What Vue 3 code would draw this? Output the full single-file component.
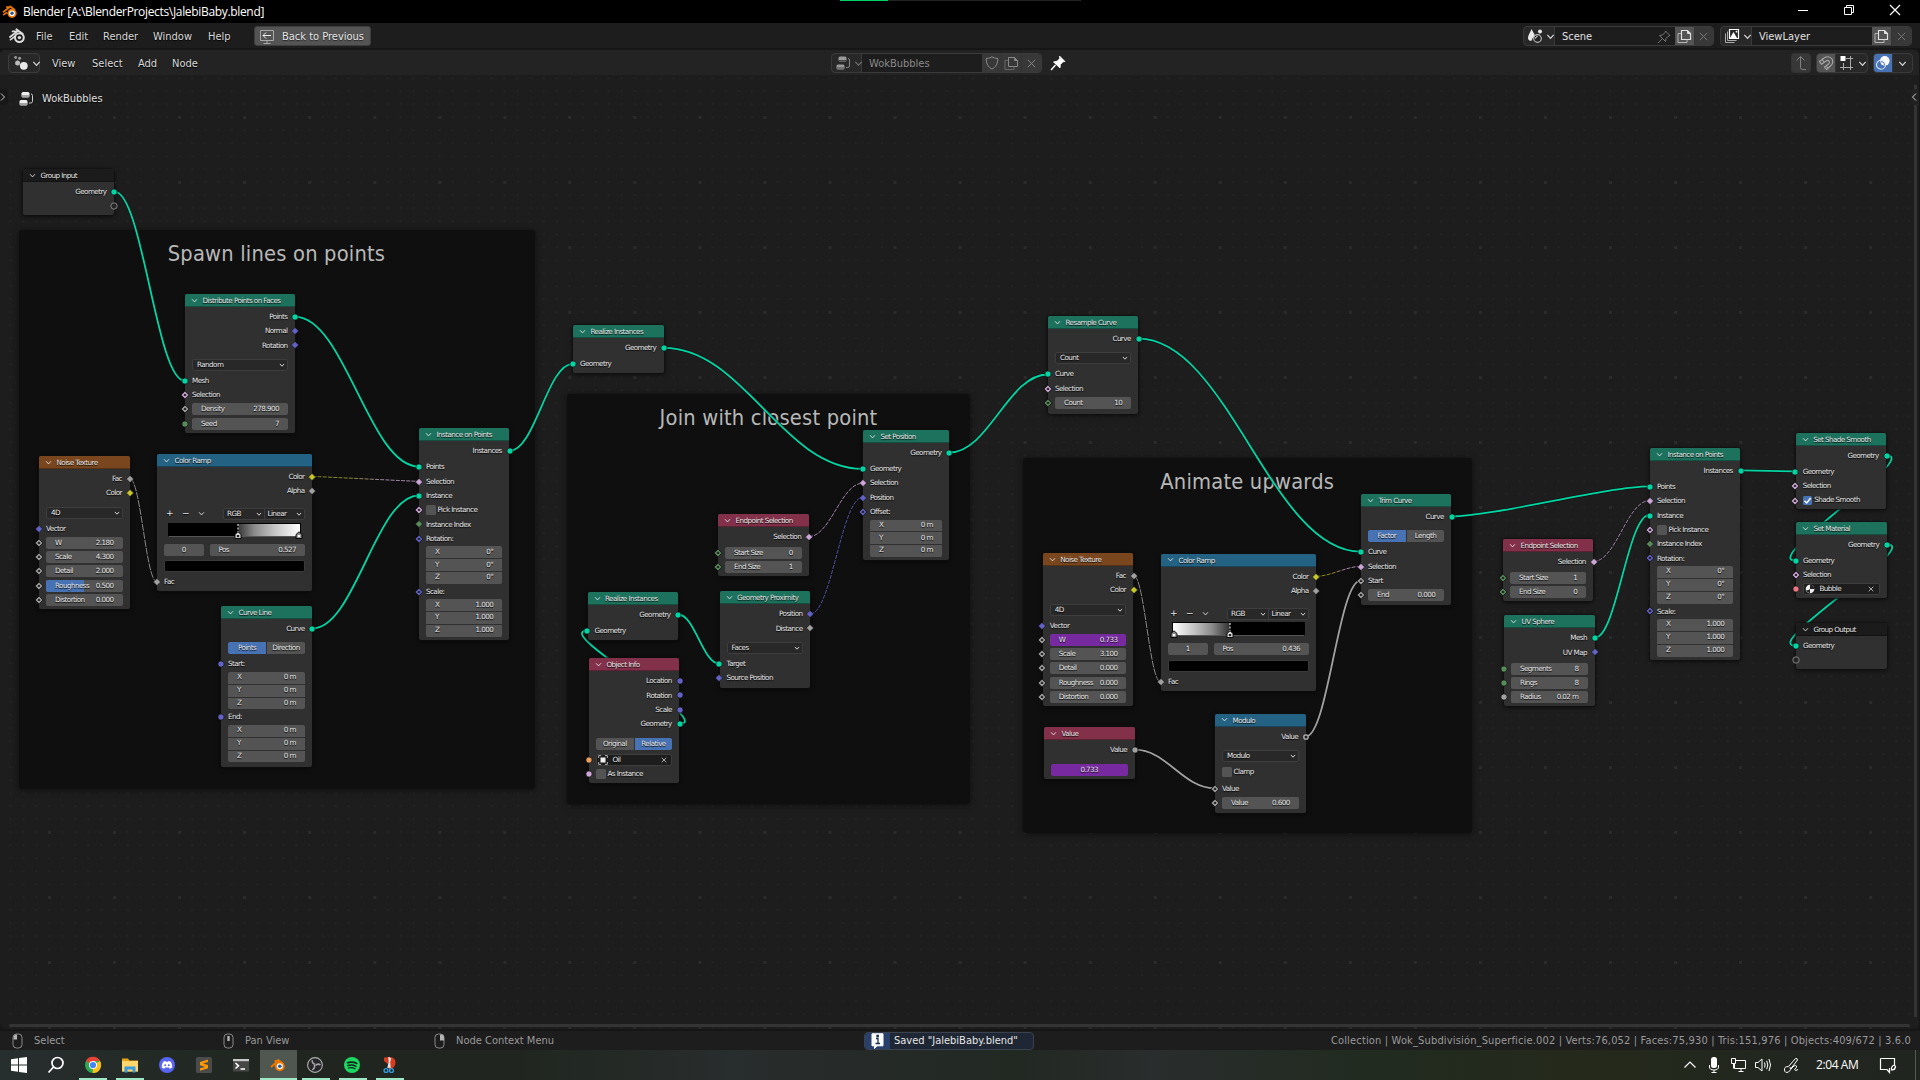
<script setup>
import { h } from 'vue'

const GEO = '#00d6a3'
const VEC = '#6363c7'
const FLT = '#a1a1a1'
const BOOL = '#cca6d6'
const INT = '#598c5c'
const COL = '#c7c729'

const shapes = {
  dot: (c) => [h('circle', { cx: 5, cy: 5, r: 3.1, fill: c, stroke: '#111', 'stroke-width': 0.7 })],
  dia: (c) => [h('path', { d: 'M5 1.4 8.6 5 5 8.6 1.4 5Z', fill: c, stroke: '#111', 'stroke-width': 0.6 })],
  ring: (c) => [
    h('path', { d: 'M5 2.2 7.8 5 5 7.8 2.2 5Z', fill: '#1c1c1c', stroke: '#111', 'stroke-width': 2.2 }),
    h('path', { d: 'M5 2.5 7.5 5 5 7.5 2.5 5Z', fill: '#1c1c1c', stroke: c, 'stroke-width': 1.4 }),
  ],
  open: (c) => [
    h('circle', { cx: 5, cy: 5, r: 2.2, fill: '#222', stroke: c, 'stroke-width': 1.3 }),
  ],
  virtual: () => [h('circle', { cx: 5, cy: 5, r: 3.2, fill: '#262626', stroke: '#8a8a8a', 'stroke-width': 0.9 })],
}
const Socket = (p) =>
  h('svg', { class: 'socket', viewBox: '0 0 10 10', width: 10, height: 10 }, shapes[p.s[0]](p.s[1]))
Socket.props = ['s']

const Chev = (p) =>
  h('svg', { width: p.size || 7, height: p.size || 7, viewBox: '0 0 8 8' }, [
    h('path', { d: 'M1.2 2.6 4 5.6 6.8 2.6', fill: 'none', stroke: 'currentColor', 'stroke-width': p.w || 1 }),
  ])
Chev.props = ['size', 'w']

const out = (label, k, c) => ({ t: 'out', label, s: [k, c] })
const inp = (label, k, c, gap) => ({ t: 'in', label, s: [k, c], gap })
const fld = (label, value, k, c, more = {}) => ({ t: 'field', label, value, s: [k, c], ...more })
const vec = (v) => ({ t: 'vec', rows: [['X', v], ['Y', v], ['Z', v]] })
const ends = (a, b) => [
  out('Selection', 'dia', BOOL),
  fld('Start Size', a, 'ring', INT, { gap: 'sm' }),
  fld('End Size', b, 'ring', INT),
]
const instanceRows = [
  out('Instances', 'dot', GEO),
  inp('Points', 'dot', GEO, 'sm'),
  inp('Selection', 'dia', BOOL),
  inp('Instance', 'dot', GEO),
  { t: 'check', label: 'Pick Instance', s: ['ring', BOOL] },
  inp('Instance Index', 'dia', INT),
  inp('Rotation:', 'ring', VEC),
  vec('0°'),
  inp('Scale:', 'ring', VEC),
  vec('1.000'),
]
const noise = (w, s, d, r, t, wMore, rMore) => [
  out('Fac', 'dia', FLT),
  out('Color', 'dia', COL),
  { t: 'drop', label: '4D', gap: 'lg' },
  inp('Vector', 'dia', VEC, 'xs'),
  fld('W', w, 'ring', FLT, wMore),
  fld('Scale', s, 'ring', FLT),
  fld('Detail', d, 'ring', FLT),
  fld('Roughness', r, 'ring', FLT, rMore),
  fld('Distortion', t, 'ring', FLT),
]
const ramp = (o) => [
  out('Color', 'dia', COL),
  out('Alpha', 'dia', FLT),
  { t: 'ramp', ...o },
  inp('Fac', 'dia', FLT),
]
const realize = [out('Geometry', 'dot', GEO), inp('Geometry', 'dot', GEO, 'sm')]

const nodes = [
  { title: 'Group Input', x: 23, y: 169, w: 91, ht: 46, k: 'group', rows: [out('Geometry', 'dot', GEO), out('', 'virtual')] },
  {
    title: 'Distribute Points on Faces', x: 185, y: 294, w: 110, ht: 139, k: 'geo',
    rows: [
      out('Points', 'dot', GEO), out('Normal', 'dia', VEC), out('Rotation', 'dia', VEC),
      { t: 'drop', label: 'Random', gap: 'lg' },
      inp('Mesh', 'dot', GEO, 'xs'), inp('Selection', 'ring', BOOL),
      fld('Density', '278.900', 'ring', FLT), fld('Seed', '7', 'dot', INT),
    ],
  },
  { title: 'Noise Texture', x: 39, y: 456, w: 90.5, ht: 153, k: 'tex', rows: noise('2.180', '4.300', '2.000', '0.500', '0.000', {}, { fill: 50 }) },
  {
    title: 'Color Ramp', x: 157, y: 454, w: 155, ht: 137, k: 'conv',
    rows: ramp({ index: '0', pos: '0.527', grad: 'linear-gradient(90deg,#000 52.7%,#3c3c3c 53.4%,#8a8a8a 65%,#c4c4c4 80%,#fff)', stops: [[52.7, 1], [99.5, 0]] }),
  },
  {
    title: 'Curve Line', x: 221, y: 606, w: 91, ht: 160.7, k: 'geo',
    rows: [
      out('Curve', 'dot', GEO), { t: 'seg', items: ['Points', 'Direction'], on: 0, gap: 'lg' },
      inp('Start:', 'dot', VEC, 'xs'), vec('0 m'), inp('End:', 'dot', VEC), vec('0 m'),
    ],
  },
  { title: 'Instance on Points', x: 419, y: 428.3, w: 90.3, ht: 211.7, k: 'geo', rows: instanceRows },
  { title: 'Realize Instances', x: 573, y: 325, w: 90.7, ht: 47.7, k: 'geo', rows: realize },
  {
    title: 'Set Position', x: 863, y: 430, w: 86, ht: 130, k: 'geo',
    rows: [
      out('Geometry', 'dot', GEO), inp('Geometry', 'dot', GEO, 'sm'), inp('Selection', 'dia', BOOL),
      inp('Position', 'dia', VEC), inp('Offset:', 'ring', VEC), vec('0 m'),
    ],
  },
  { title: 'Endpoint Selection', x: 718, y: 514, w: 90.7, ht: 62, k: 'inp', rows: ends('0', '1') },
  {
    title: 'Geometry Proximity', x: 719.5, y: 591.3, w: 90.5, ht: 96.4, k: 'geo',
    rows: [
      out('Position', 'dia', VEC), out('Distance', 'dia', FLT), { t: 'drop', label: 'Faces', gap: 'lg' },
      inp('Target', 'dot', GEO, 'xs'), inp('Source Position', 'dia', VEC),
    ],
  },
  { title: 'Realize Instances', x: 587.5, y: 592, w: 90.5, ht: 48, k: 'geo', rows: realize },
  {
    title: 'Object Info', x: 589, y: 658.3, w: 90.3, ht: 124.7, k: 'inp',
    rows: [
      out('Location', 'dot', VEC), out('Rotation', 'dot', VEC), out('Scale', 'dot', VEC), out('Geometry', 'dot', GEO),
      { t: 'seg', items: ['Original', 'Relative'], on: 1, gap: 'lg' },
      { t: 'data', label: 'Oil', icon: 'object', s: ['dot', '#ed9e5c'], gap: 'sm' },
      { t: 'check', label: 'As Instance', s: ['dot', BOOL] },
    ],
  },
  {
    title: 'Resample Curve', x: 1048, y: 316, w: 90.3, ht: 97.7, k: 'geo',
    rows: [
      out('Curve', 'dot', GEO), { t: 'drop', label: 'Count', gap: 'lg' },
      inp('Curve', 'dot', GEO, 'xs'), inp('Selection', 'ring', BOOL), fld('Count', '10', 'ring', INT),
    ],
  },
  {
    title: 'Trim Curve', x: 1361, y: 494, w: 90.3, ht: 111.3, k: 'geo',
    rows: [
      out('Curve', 'dot', GEO), { t: 'seg', items: ['Factor', 'Length'], on: 0, gap: 'lg' },
      inp('Curve', 'dot', GEO, 'xs'), inp('Selection', 'dia', BOOL), inp('Start', 'ring', FLT), fld('End', '0.000', 'ring', FLT),
    ],
  },
  { title: 'Noise Texture', x: 1042.8, y: 553, w: 90.7, ht: 153.3, k: 'tex', rows: noise('0.733', '3.100', '0.000', '0.000', '0.000', { driven: true }, {}) },
  {
    title: 'Color Ramp', x: 1161, y: 553.7, w: 155, ht: 137, k: 'conv',
    rows: ramp({ index: '1', pos: '0.436', grad: 'linear-gradient(90deg,#fff,#c4c4c4 16%,#8a8a8a 30%,#333 43%,#000 43.6%)', stops: [[0.7, 0], [43.6, 1]] }),
  },
  {
    title: 'Value', x: 1044, y: 727.3, w: 90.5, ht: 51.4, k: 'inp',
    rows: [out('Value', 'dot', FLT), { t: 'seg', items: ['0.733'], driven: true, gap: 'lg' }],
  },
  {
    title: 'Modulo', x: 1215, y: 713.7, w: 90.7, ht: 99.3, k: 'conv',
    rows: [
      out('Value', 'open', '#b4b4b4'), { t: 'drop', label: 'Modulo', gap: 'lg' }, { t: 'check', label: 'Clamp', gap: 'xs' },
      inp('Value', 'ring', FLT, 'md'), fld('Value', '0.600', 'ring', FLT),
    ],
  },
  { title: 'Endpoint Selection', x: 1503, y: 538.8, w: 90.3, ht: 62, k: 'inp', rows: ends('1', '0') },
  {
    title: 'UV Sphere', x: 1504, y: 615.3, w: 90.5, ht: 91, k: 'geo',
    rows: [
      out('Mesh', 'dot', GEO), out('UV Map', 'dia', VEC), fld('Segments', '8', 'dot', INT, { gap: 'sm' }),
      fld('Rings', '8', 'dot', INT), fld('Radius', '0.02 m', 'dot', FLT),
    ],
  },
  { title: 'Instance on Points', x: 1650, y: 448, w: 90.3, ht: 211.5, k: 'geo', rows: instanceRows },
  {
    title: 'Set Shade Smooth', x: 1795.7, y: 433, w: 90.5, ht: 75.7, k: 'geo',
    rows: [
      out('Geometry', 'dot', GEO), inp('Geometry', 'dot', GEO, 'sm'), inp('Selection', 'ring', BOOL),
      { t: 'check', label: 'Shade Smooth', on: true, s: ['ring', BOOL] },
    ],
  },
  {
    title: 'Set Material', x: 1796, y: 521.8, w: 90.7, ht: 76.5, k: 'geo',
    rows: [
      out('Geometry', 'dot', GEO), inp('Geometry', 'dot', GEO, 'sm'), inp('Selection', 'ring', BOOL),
      { t: 'data', label: 'Bubble', icon: 'material', s: ['dot', '#eb7582'] },
    ],
  },
  { title: 'Group Output', x: 1796, y: 623, w: 90.7, ht: 45.7, k: 'group', rows: [inp('Geometry', 'dot', GEO), inp('', 'virtual')] },
]

const frames = [
  { title: 'Spawn lines on points', x: 18.5, y: 230, w: 516, h: 559 },
  { title: 'Join with closest point', x: 567, y: 393.5, w: 403, h: 410 },
  { title: 'Animate upwards', x: 1022.7, y: 457.5, w: 449, h: 375.5 },
]

// x1, y1, x2, y2, colour, style
const links = [
  [114.5, 191.7, 184.6, 380.8, GEO, 'solid'],
  [295.3, 316.8, 418.7, 466.5, GEO, 'solid'],
  [312.3, 628.5, 418.7, 495.5, GEO, 'solid'],
  [129.8, 478.5, 156.8, 581.8, FLT, 'thin'],
  [312.6, 476.5, 418.7, 481.3, 'url(#colBool1)', 'dash'],
  [509.6, 450.8, 572.7, 363.8, GEO, 'solid'],
  [664, 347.8, 862.5, 468.8, GEO, 'solid'],
  [809, 536.5, 862.5, 483.3, BOOL, 'dash'],
  [810.5, 613.8, 862.5, 497.5, VEC, 'dash'],
  [678.3, 614.5, 719.3, 663.8, GEO, 'solid'],
  [679.6, 723.7, 587.3, 630.7, GEO, 'solid'],
  [949.4, 452.5, 1047.6, 374.5, GEO, 'solid'],
  [1138.6, 338.7, 1360.5, 551.7, GEO, 'solid'],
  [1133.6, 575.5, 1160.4, 681.7, FLT, 'thin'],
  [1316.4, 576.3, 1360.5, 566.4, 'url(#colBool2)', 'dash'],
  [1134.8, 749.7, 1214.8, 788.3, FLT, 'solid'],
  [1306, 736.3, 1360.5, 580.7, FLT, 'solid'],
  [1451.6, 516.4, 1649.5, 486.4, GEO, 'solid'],
  [1593.6, 561.4, 1649.5, 500.7, BOOL, 'dash'],
  [1594.8, 637.8, 1649.5, 514.8, GEO, 'solid'],
  [1740.6, 470.3, 1795.3, 471.4, GEO, 'solid'],
  [1886.3, 455.3, 1795.6, 560.7, GEO, 'solid'],
  [1886.9, 544.4, 1795.6, 645.7, GEO, 'solid'],
]
const curve = ([x1, y1, x2, y2]) => {
  const dx = Math.abs(x2 - x1)
  const slope = Math.abs((y2 - y1) / (x2 - x1))
  const off = 0.4 * dx * Math.min(1, slope * 3.5)
  return `M${x1} ${y1}C${x1 + off} ${y1} ${x2 - off} ${y2} ${x2} ${y2}`
}

const hints = [
  ['Select', 'M5 1.5v5H1.6V4.5a3 3 0 0 1 3-3Z', 'hint-a'],
  ['Pan View', 'M4.3 3h2.4v5H4.3Z', 'hint-b'],
  ['Node Context Menu', 'M6 1.5h1a3 3 0 0 1 3 3v3H6Z', 'hint-c'],
]
</script>

<template>
  <div class="screen">
    <div class="titlebar">
      <svg class="app-logo" width="16" height="16" viewBox="0 0 16 16">
        <path d="M1 8.2 7.6 3.2H4.2M1.2 11 5 8.4M7.5 2 13 6" fill="none" stroke="#ea7600" stroke-width="1.7" />
        <circle cx="10" cy="9.3" r="4.6" fill="#ea7600" />
        <circle cx="10" cy="9.3" r="2.9" fill="#fff" />
        <circle cx="10" cy="9.3" r="1.7" fill="#245b95" />
      </svg>
      <span class="title-text">Blender [A:\BlenderProjects\JalebiBaby.blend]</span>
      <div class="load"><i></i></div>
      <svg class="win" width="12" height="12" viewBox="0 0 12 12"><path d="M1 6.5h10" stroke="#fff" /></svg>
      <svg class="win" width="12" height="12" viewBox="0 0 12 12">
        <path d="M1.5 3.5h7v7h-7ZM3.5 3.5v-2h7v7h-2" fill="none" stroke="#fff" />
      </svg>
      <svg class="win" width="12" height="12" viewBox="0 0 12 12"><path d="M1 1l10 10M11 1 1 11" stroke="#fff" stroke-width="1.2" /></svg>
    </div>

    <div class="topbar">
      <svg class="blogo" width="17" height="16" viewBox="0 0 17 16">
        <path d="M1 9 8.2 3.4H3.6M1.6 11.6 5.6 8.6M7.4 1.2 13.6 5.8" fill="none" stroke="#ddd" stroke-width="1.8" stroke-linecap="round" />
        <circle cx="10.4" cy="9.6" r="4.4" fill="none" stroke="#ddd" stroke-width="2" />
        <circle cx="10.4" cy="9.6" r="1.7" fill="#ddd" />
      </svg>
      <span class="m1">File</span><span class="m2">Edit</span><span class="m3">Render</span><span class="m4">Window</span><span class="m5">Help</span>
      <button class="back">
        <svg width="16" height="16" viewBox="0 0 16 16" fill="none" stroke="#d8d8d8">
          <path d="M1.5 1.5h13v10h-13ZM8 12v2.5M4.5 14.5h7" stroke="#a8a8a8" />
          <path d="M12 6.5H4M7 3.5l-3 3 3 3" stroke="#eee" />
        </svg>
        <span>Back to Previous</span>
      </button>
      <div class="spacer"></div>
      <div class="group scene">
        <span class="seg-icon">
          <svg width="16" height="16" viewBox="0 0 16 16">
            <path d="M4.5 1C3 5 1 7.5 1 10c0 2 1.5 2.8 3.5 2.8Q6 9 8 7.5Z" fill="#e6e6e6" />
            <circle cx="13" cy="3.5" r="2" fill="#e6e6e6" />
            <circle cx="10.5" cy="10.5" r="3.8" fill="#222" stroke="#bbb" stroke-width="1.2" />
            <path d="M8.5 10.5a2 2 0 0 1 2-2" fill="none" stroke="#eee" />
          </svg>
          <Chev :size="9" w="1.1" />
        </span>
        <span class="name">Scene
          <svg width="14" height="14" viewBox="0 0 14 14" fill="none" stroke="#777"><path d="M1 13l4-4M8.5 1 13 5.5l-1.5.5-2.500 2.500-.5 3L2.500 5.500l3-.5L8 2.500Z" /></svg>
        </span>
        <span class="cell lit">
          <svg width="15" height="15" viewBox="0 0 15 15" fill="none" stroke="#e0e0e0"><path d="M4.5 1.5h6l3 3v6h-9Z" stroke-width="1.2" /><path d="M10.5 1.5v3h3Z" fill="#e0e0e0" /><path d="M4 4.5H1v9h9v-3" stroke="#b5b5b5" /></svg>
        </span>
        <span class="cell dim"><svg width="9" height="9" viewBox="0 0 9 9"><path d="M.8.8l7.4 7.4M8.2.8.8 8.2" stroke="#777" /></svg></span>
      </div>
      <div class="group layer">
        <span class="seg-icon">
          <svg width="16" height="16" viewBox="0 0 16 16" fill="none" stroke="#ddd">
            <path d="M5.5 1.5h9v9h-9Z" stroke="#fff" stroke-width="1.2" /><path d="M6 10l3.5-6 3.5 6Z" fill="#fff" stroke="none" /><path d="M3.5 3.5v9h9M1.5 5.5v9h9" stroke="#aaa" /><circle cx="12.5" cy="3.7" r=".9" fill="#fff" stroke="none" />
          </svg>
          <Chev :size="9" w="1.1" />
        </span>
        <span class="name">ViewLayer</span>
        <span class="cell lit">
          <svg width="15" height="15" viewBox="0 0 15 15" fill="none" stroke="#e0e0e0"><path d="M4.5 1.5h6l3 3v6h-9Z" stroke-width="1.2" /><path d="M10.5 1.5v3h3Z" fill="#e0e0e0" /><path d="M4 4.5H1v9h9v-3" stroke="#b5b5b5" /></svg>
        </span>
        <span class="cell dim"><svg width="9" height="9" viewBox="0 0 9 9"><path d="M.8.8l7.4 7.4M8.2.8.8 8.2" stroke="#777" /></svg></span>
      </div>
    </div>

    <div class="editor">
      <div class="header">
        <span class="etype">
          <svg width="16" height="16" viewBox="0 0 16 16"><circle cx="2.6" cy="2.5" r="1.4" fill="#999" /><circle cx="6.6" cy="3.3" r="1.5" fill="#999" /><circle cx="4.6" cy="8" r="2.5" fill="#bbb" /><circle cx="10.8" cy="10.8" r="3.9" fill="#e8e8e8" /></svg>
          <Chev :size="9" w="1.1" />
        </span>
        <span class="h1">View</span><span class="h2">Select</span><span class="h3">Add</span><span class="h4">Node</span>
        <div class="group tree">
          <span class="seg-icon">
            <svg width="16" height="16" viewBox="0 0 16 16"><rect x="3.5" y="1.5" width="8" height="5" rx="1.5" fill="#999" /><rect x="1.5" y="9.5" width="8" height="5" rx="1.5" fill="#999" /><path d="M4 5.5h7M2 13h7" stroke="#333" stroke-width=".8" /><path d="M13 3.5q1.5 0 1.5 1.5v6q0 1.5-2 1.5h-1.5" fill="none" stroke="#8a8a8a" /></svg>
            <Chev :size="9" />
          </span>
          <span class="name">WokBubbles</span>
          <span class="cell dim"><svg width="14" height="14" viewBox="0 0 14 14" fill="none" stroke="#888"><path d="M7 .8Q9.5 2.5 12.8 2.5 13 10 7 13.2 1 10 1.2 2.5 4.5 2.5 7 .8Z" /></svg></span>
          <span class="cell dim"><svg width="15" height="15" viewBox="0 0 15 15" fill="none" stroke="#888"><path d="M4.5 1.5h6l3 3v6h-9Z" /><path d="M10.5 1.5v3h3Z" fill="#888" /><path d="M4 4.5H1v9h9v-3" stroke="#666" /></svg></span>
          <span class="cell dim"><svg width="9" height="9" viewBox="0 0 9 9"><path d="M.8.8l7.4 7.4M8.2.8.8 8.2" stroke="#888" /></svg></span>
        </div>
        <svg class="pin" width="16" height="16" viewBox="0 0 16 16"><path d="M1 15 5.500 10" stroke="#fff" stroke-width="1.4" /><path d="M9.5 1 15 6.500l-2 .3-2.600 2.700-.4 3.500-6.500-6L7.500 6 9.800 3.300Z" fill="#fff" stroke="#fff" stroke-width=".8" /></svg>
        <div class="spacer"></div>
        <span class="solo"><svg width="14" height="16" viewBox="0 0 14 16" fill="none" stroke="#808080"><path d="M12 14.5H8.5q-2 0-2-2V1.5M2.5 5.5l4-4 4 4" /></svg></span>
        <div class="group snap">
          <span class="cell lit"><svg width="16" height="16" viewBox="0 0 16 16" fill="none" stroke="#a8a8a8" stroke-width="1.1"><path d="M1.5 6.5 6 3Q11 0 14 4q2 4-1.5 7l-4 3.5-2-2.4L10.5 9q1.5-1.5.5-3-1.5-1.2-3 0L3.5 9.2ZM10.5 14l-2-2.5M4 4.5l2.2 2.6" /></svg></span>
          <span class="seg-icon"><svg width="16" height="16" viewBox="0 0 16 16" fill="none" stroke="#aaa"><path d="M7 3.5h7M1 12.5h13M4.5 8v7M11.5 1v14" /><rect x="1.5" y="1" width="5" height="5" fill="#fff" stroke="none" /></svg><Chev :size="9" w="1.1" /></span>
        </div>
        <div class="group over">
          <span class="cell blue"><svg width="16" height="16" viewBox="0 0 16 16"><circle cx="9.8" cy="5.8" r="4.8" fill="#fff" /><circle cx="6" cy="9.8" r="4.5" fill="none" stroke="#dce6f5" stroke-width="1.1" /><path d="M5.5 7Q9 6 9.5 10" fill="none" stroke="#4772b3" /></svg></span>
          <span class="seg-icon"><Chev :size="9" w="1.1" /></span>
        </div>
      </div>

      <div class="canvas">
        <svg class="grid" width="1920" height="954">
          <defs>
            <pattern id="minor" width="13.008" height="13" x="3.4" y="2.3" patternUnits="userSpaceOnUse"><rect x="6" y="0" width="2" height="2" fill="#232323" /></pattern>
            <pattern id="major" width="65.04" height="65" x="-17" y="-24" patternUnits="userSpaceOnUse"><rect x="0" y="0" width="3" height="3" fill="#2b2b2b" /></pattern>
          </defs>
          <rect width="1920" height="954" fill="url(#minor)" />
          <rect width="1920" height="954" fill="url(#major)" />
        </svg>

        <div class="world">
          <div v-for="f in frames" :key="f.title" class="frame" :style="{ left: f.x + 'px', top: f.y + 'px', width: f.w + 'px', height: f.h + 'px' }">
            {{ f.title }}
          </div>

          <svg class="links" width="1920" height="1080">
            <defs>
              <linearGradient id="colBool1" gradientUnits="userSpaceOnUse" x1="312" x2="418" y1="0" y2="0"><stop offset=".35" stop-color="#a9a92b" /><stop offset=".7" stop-color="#cca6d6" /></linearGradient>
              <linearGradient id="colBool2" gradientUnits="userSpaceOnUse" x1="1316" x2="1360" y1="0" y2="0"><stop offset=".35" stop-color="#a9a92b" /><stop offset=".7" stop-color="#cca6d6" /></linearGradient>
            </defs>
            <g v-for="(l, i) in links" :key="i" fill="none">
              <path :d="curve(l)" stroke="#0b0b0b" stroke-opacity=".55" :stroke-width="l[5] === 'solid' ? 3.2 : 2" />
              <path :d="curve(l)" :stroke="l[4]" :class="l[5]" />
            </g>
          </svg>

          <div v-for="(n, i) in nodes" :key="'n' + i" class="node" :class="n.k" :style="{ left: n.x + 'px', top: n.y + 'px', width: n.w + 'px', height: n.ht + 'px' }">
            <div class="nhead"><Chev :size="7" /><span>{{ n.title }}</span></div>
            <div class="nbody">
              <div v-for="(r, j) in n.rows" :key="j" class="row" :class="[r.t, r.gap && 'gap-' + r.gap]">
                <Socket v-if="r.s" :s="r.s" />
                <span v-if="r.t === 'out' || r.t === 'in'" class="lab">{{ r.label }}</span>
                <div v-else-if="r.t === 'field'" class="box" :class="{ driven: r.driven }">
                  <i v-if="r.fill" class="slider" :style="{ width: r.fill + '%' }"></i>
                  <span>{{ r.label }}</span><span>{{ r.value }}</span>
                </div>
                <div v-else-if="r.t === 'drop'" class="dropbox"><span>{{ r.label }}</span><Chev :size="6" w="1.2" /></div>
                <div v-else-if="r.t === 'seg'" class="segs" :class="{ driven: r.driven }">
                  <span v-for="(s, q) in r.items" :key="s" :class="{ on: q === r.on }">{{ s }}</span>
                </div>
                <template v-else-if="r.t === 'check'">
                  <i class="tick" :class="{ on: r.on }"><svg v-if="r.on" width="9" height="9" viewBox="0 0 9 9"><path d="M1.5 4.8 3.7 7 7.7 2" fill="none" stroke="#fff" stroke-width="1.4" /></svg></i>
                  <span>{{ r.label }}</span>
                </template>
                <div v-else-if="r.t === 'vec'" class="vbox">
                  <div v-for="v in r.rows" :key="v[0]"><span>{{ v[0] }}</span><span>{{ v[1] }}</span></div>
                </div>
                <div v-else-if="r.t === 'data'" class="datablock">
                  <svg v-if="r.icon === 'object'" width="10" height="10" viewBox="0 0 10 10"><path d="M.6 3V.6H3M7 .6h2.4V3M9.4 7v2.4H7M3 9.4H.6V7" fill="none" stroke="#bbb" stroke-width=".9" /><rect x="2.5" y="2.5" width="5" height="5" fill="#f0f0f0" /></svg>
                  <svg v-else width="10" height="10" viewBox="0 0 10 10"><circle cx="5" cy="5" r="4.3" fill="#eee" /><path d="M5 .7V5h4.3A4.3 4.3 0 0 0 5 .7ZM5 5v4.3Q2 9 .9 6Q3 7 5 5Z" fill="#222" /></svg>
                  <span>{{ r.label }}</span>
                  <svg width="6" height="6" viewBox="0 0 6 6"><path d="M.7.7l4.6 4.6M5.3.7.7 5.3" stroke="#ccc" stroke-width=".8" /></svg>
                </div>
                <div v-else-if="r.t === 'ramp'" class="rampui">
                  <div class="rtools">
                    <b>+</b><b>−</b><Chev :size="7" />
                    <div class="pair"><span>RGB<Chev :size="6" w="1.2" /></span><span>Linear<Chev :size="6" w="1.2" /></span></div>
                  </div>
                  <div class="band" :style="{ background: r.grad }">
                    <svg v-for="s in r.stops" :key="s[0]" width="8" height="17" viewBox="0 0 8 17" :style="{ left: s[0] + '%' }">
                      <path v-if="s[1]" d="M4 1v9" stroke="#fff" stroke-dasharray="2 1.5" />
                      <path d="M1 15.5V11.5L4 8.8 7 11.5V15.5Z" :fill="s[1] ? '#ddd' : '#888'" stroke="#000" stroke-width=".9" />
                      <path d="M2.8 12h2.4v2.2H2.8Z" :fill="s[1] ? '#222' : '#fff'" />
                    </svg>
                  </div>
                  <div class="rpos"><span class="idx">{{ r.index }}</span><span class="pos"><em>Pos</em><em>{{ r.pos }}</em></span></div>
                  <div class="swatch"></div>
                </div>
              </div>
            </div>
          </div>
        </div>

        <div class="crumb">
          <svg width="16" height="16" viewBox="0 0 16 16"><rect x="3.5" y="1" width="8" height="5.5" rx="1.5" fill="#eee" /><rect x="1.5" y="9" width="8" height="5.5" rx="1.5" fill="#eee" /><path d="M4 5h7M2 13h7" stroke="#333" stroke-width=".8" /><path d="M13 3q1.5 0 1.5 1.5v6q0 1.5-2 1.5h-1.5" fill="none" stroke="#ccc" /></svg>
          <span>WokBubbles</span>
        </div>
        <div class="tab left"><svg width="6" height="10" viewBox="0 0 6 10"><path d="M1 1.5 4.5 5 1 8.5" fill="none" stroke="#ccc" /></svg></div>
        <div class="vscroll"></div>
        <div class="tab right"><svg width="6" height="10" viewBox="0 0 6 10"><path d="M5 1.5 1.5 5 5 8.5" fill="none" stroke="#ccc" /></svg></div>
        <div class="hscroll"></div>
      </div>
    </div>

    <div class="status">
      <div v-for="t in hints" :key="t[0]" class="hint" :class="t[2]">
        <svg width="11" height="16" viewBox="0 0 11 16"><rect x="1" y="1" width="9" height="14" rx="3.5" fill="none" stroke="#8a8a8a" /><path :d="t[1]" fill="#b4b4b4" /></svg>
        <span>{{ t[0] }}</span>
      </div>
      <div class="report">
        <b><svg width="15" height="16" viewBox="0 0 15 16"><path d="M2 .8h11v12H7L4.5 15.5V12.8H2Z" fill="#fff" stroke="#fff" stroke-linejoin="round" /><path d="M6 5.5h2v5M5.5 10.5h4.5M7 2.3h1.3v1.3H7Z" fill="none" stroke="#1d3050" stroke-width="1.3" /></svg></b>
        <span>Saved "JalebiBaby.blend"</span>
      </div>
      <div class="spacer"></div>
      <span class="stats">Collection | Wok_Subdivisión_Superficie.002 | Verts:76,052 | Faces:75,930 | Tris:151,976 | Objects:409/672 | 3.6.0</span>
    </div>

    <div class="taskbar">
      <span class="app"><svg width="18" height="18" viewBox="0 0 18 18"><path d="M1 3.2 8 2.2V8.5H1ZM9 2 17 1V8.5H9ZM1 9.5H8V15.8L1 14.8ZM9 9.5H17V17L9 16Z" fill="#fff" /></svg></span>
      <span class="app"><svg width="18" height="18" viewBox="0 0 18 18" fill="none" stroke="#fff" stroke-width="1.7"><circle cx="10.5" cy="7" r="5.5" /><path d="M6.5 11 1.5 16.5" /></svg></span>
      <span class="app run"><svg width="18" height="18" viewBox="0 0 18 18"><circle cx="9" cy="9" r="8" fill="#2da94f" /><path d="M9 9 16 5A8 8 0 0 1 8.7 17Z" fill="#fbc116" /><path d="M2 5A8 8 0 0 1 16 5H9V9Z" fill="#ea4335" /><circle cx="9" cy="9" r="4" fill="#fff" /><circle cx="9" cy="9" r="3.1" fill="#4285f4" /></svg></span>
      <span class="app run"><svg width="18" height="18" viewBox="0 0 18 18"><path d="M1 2.5h6l1.5 2H17v11H1Z" fill="#e8a317" /><path d="M1 5h16v10.5H1Z" fill="#ffd66b" /><path d="M3.5 16.5v-6h11v6h-3v-3h-5v3Z" fill="#3b9be0" /></svg></span>
      <span class="app"><svg width="18" height="18" viewBox="0 0 18 18"><circle cx="9" cy="9" r="8" fill="#5865f2" /><path d="M5 6Q6.5 5 7.5 5l.4.7h2.2l.4-.7q1 0 2.5 1 1.5 3 1.2 5.5-1.2 1-2.5 1.2l-.7-1.2H7l-.7 1.2Q5 12.5 3.8 11.5 3.5 9 5 6Z" fill="#fff" /><circle cx="7.2" cy="9.2" r="1" fill="#5865f2" /><circle cx="10.8" cy="9.2" r="1" fill="#5865f2" /></svg></span>
      <span class="app"><svg width="18" height="18" viewBox="0 0 18 18"><rect x="1" y="1" width="16" height="16" rx="1.5" fill="#4b4b4b" /><path d="M13 3.5 5 6v3.3l5 1.6L5 12.3v2.5l8-2.6V9L8 7.5l5-1.6Z" fill="#ff9800" /></svg></span>
      <span class="app"><svg width="18" height="18" viewBox="0 0 18 18"><rect x="1" y="3" width="16" height="12.5" fill="#464646" /><rect x="1" y="3" width="16" height="2.2" fill="#c8c8c8" /><path d="M3.5 7 6.5 9.8 3.5 12.5M8.5 13h4.5" fill="none" stroke="#fff" stroke-width="1.6" /></svg></span>
      <span class="app run active"><svg width="18" height="18" viewBox="0 0 18 18"><path d="M2 11 9 5H5.5M8.5 3.5 14 8" fill="none" stroke="#ea7600" stroke-width="2" /><circle cx="10.8" cy="10.3" r="5" fill="#ea7600" /><circle cx="10.8" cy="10.3" r="3" fill="#fff" /><circle cx="10.8" cy="10.3" r="1.8" fill="#245b95" /></svg></span>
      <span class="app run"><svg width="18" height="18" viewBox="0 0 18 18" fill="none"><circle cx="9" cy="9" r="7.4" fill="#25252a" stroke="#b0b0b0" stroke-width="1.1" /><g stroke="#a8a8a8" stroke-width="1.5"><path d="M6.2 4.2Q6 7.8 9.3 8.3" /><path d="M6.2 4.2Q6 7.8 9.3 8.3" transform="rotate(120 9 9)" /><path d="M6.2 4.2Q6 7.8 9.3 8.3" transform="rotate(240 9 9)" /></g></svg></span>
      <span class="app run"><svg width="18" height="18" viewBox="0 0 18 18" fill="none" stroke="#12241a" stroke-linecap="round"><circle cx="9" cy="9" r="8" fill="#1ed760" stroke="none" /><path d="M4.5 6.7Q9.5 5.3 13.8 7.5" stroke-width="1.6" /><path d="M5 9.5q4.2-1.2 8 .8" stroke-width="1.4" /><path d="M5.3 12q3.6-.9 6.8.7" stroke-width="1.2" /></svg></span>
      <span class="app run"><svg width="18" height="18" viewBox="0 0 18 18" fill="none"><path d="M4 1.500Q15.500-1 15.500 6.500 15.500 12 9 14V9L4 5Z" fill="#d83b1e" /><path d="M9 1 10 12M10.500 2 8 12" stroke="#dfe6ea" stroke-width="1.5" /><circle cx="6" cy="14.500" r="1.900" stroke="#2f9be0" stroke-width="1.4" /><circle cx="11.500" cy="14.500" r="1.900" stroke="#2f9be0" stroke-width="1.4" /></svg></span>
      <div class="spacer"></div>
      <div class="tray">
        <svg class="t1" width="14" height="16" viewBox="0 0 14 16" fill="none" stroke="#fff" stroke-width="1.2"><path d="M1.5 10.5 7 5l5.5 5.5" /></svg>
        <svg class="t2" width="12" height="18" viewBox="0 0 12 18"><rect x="3" y="1" width="6" height="11" rx="2.5" fill="#fff" /><path d="M1.5 9v2q0 3 4.5 3t4.5-3V9M6 14v2.5M3.5 16.5h5" fill="none" stroke="#fff" /></svg>
        <svg class="t3" width="17" height="16" viewBox="0 0 17 16" fill="none" stroke="#fff"><path d="M6 3.5h9.5v8H4.5V7M8.5 14.5h5M11 11.5v3M1.5 1.5h4v5h-4ZM3.5 6.5v5" /></svg>
        <svg class="t4" width="18" height="16" viewBox="0 0 18 16" fill="none" stroke="#fff"><path d="M1.5 5.5H4L8 2v12L4 10.5H1.5ZM10.5 5.5q1.2 2.5 0 5M12.7 3.8q2.2 4.2 0 8.4M15 2q3 6 0 12" /></svg>
        <svg class="t5" width="17" height="17" viewBox="0 0 17 17" fill="none" stroke="#fff"><path d="M5.500 9.500 12.500 1.500q2-.5 2 1.500L8 11.500M5.500 9.500Q1 9.500 1.500 13 2 16.500 5.500 15 9 13 7 10M8 12q4-5 5.500-3 .5 1.500-2 3.500 1 2 3.500 0" /></svg>
        <span class="clock">2:04 AM</span>
        <svg class="t6" width="18" height="18" viewBox="0 0 18 18" fill="none" stroke="#fff" stroke-width="1.2"><path d="M1.5 2.5h14v11H12M1.5 2.5v11H8l2.5 3V12" /><path d="M15.5 9Q12 10 12.5 14q3 0 4-3Z" fill="#222" /></svg>
        <i class="peek"></i>
      </div>
    </div>
  </div>
</template>

<style>
body {
  background: #000;
  overflow: hidden;
}
</style>

<style scoped>
* { box-sizing: border-box; }
.screen {
  width: 1920px;
  height: 1080px;
  display: flex;
  flex-direction: column;
  overflow: hidden;
  background: #161616;
  color: #d9d9d9;
  font: 11px/20px "DejaVu Sans Condensed", "DejaVu Sans", sans-serif;
  white-space: nowrap;
}
svg { flex: none; display: block; }
.spacer { flex: 1; }

.titlebar { height: 23px; flex: none; background: #000; display: flex; align-items: flex-start; position: relative; }
.app-logo { margin: 4px 0 0 2px; }
.title-text { margin-left: 5px; flex: 1; color: #fff; font: 12px/23px "Open Sans", "Noto Sans", sans-serif; letter-spacing: -0.33px; }
.load { position: absolute; left: 840px; top: 0; width: 241px; height: 1px; background: #222; }
.load i { display: block; width: 48px; height: 1px; background: #00d469; }
.win { margin: 4px 34px 0 0; }
.win:last-child { margin-right: 19px; }

.topbar { height: 25px; flex: none; background: #1d1d1d; display: flex; align-items: flex-start; padding-top: 3px; }
.topbar > span, .header > span { line-height: 22px; text-shadow: 0 1px 1px #000; }
.blogo { margin: 2px 0 0 9px; }
.m1 { width: 33px; margin-left: 10px; }
.m2 { width: 34px; }
.m3 { width: 50px; }
.m4 { width: 55px; }
.m5 { width: 46px; }
.back {
  display: flex; align-items: center; gap: 7px; height: 20px; width: 117px; padding: 1px 0 0 4px;
  background: #545454; border: 1px solid #3d3d3d; border-radius: 3px; color: #e6e6e6; font: inherit; text-shadow: 0 1px 1px #222;
}
.group { display: flex; height: 20px; border: 1px solid #3a3a3a; border-radius: 4px; overflow: hidden; background: #282828; }
.group > span { display: flex; align-items: center; }
.seg-icon { width: 31px; flex: none; padding-left: 3px; gap: 3px; border-right: 1px solid #3a3a3a; }
.seg-icon:last-child { border-right: 0; }
.name { width: 120px; flex: none; padding: 1px 4px 0 7px; background: #1d1d1d; justify-content: space-between; color: #e0e0e0; }
.cell { flex: 1; justify-content: center; border-right: 1px solid #333; }
.cell:last-child { border-right: 0; }
.lit { background: #545454; }
.dim { background: #383838; }
.blue { background: #4772b3; }
.scene { width: 191px; margin-right: 6px; }
.layer { width: 192px; margin-right: 8px; }

.editor { margin: 2px 1px 0 0; height: 979px; flex: none; border-radius: 5px; overflow: hidden; display: flex; flex-direction: column; background: #1d1d1d; }
.header { height: 25px; flex: none; background: #232323; display: flex; align-items: flex-start; padding-top: 3px; }
.etype { display: flex; align-items: center; gap: 3px; width: 32px; height: 20px; margin-left: 8px; padding-left: 4px; background: #282828; border: 1px solid #3d3d3d; border-radius: 4px; }
.h1 { width: 40px; margin-left: 12px; }
.h2 { width: 46px; }
.h3 { width: 34px; }
.h4 { width: 659px; }
.tree { width: 211px; color: #777; }
.tree .name { color: #8a8a8a; }
.tree .seg-icon { width: 30px; }
.pin { margin: 2px 0 0 8px; }
.solo { display: flex; align-items: center; justify-content: center; width: 20px; height: 20px; background: #383838; border: 1px solid #333; border-radius: 3px; margin-right: 5px; }
.snap { width: 52px; margin-right: 5px; }
.over { width: 40px; margin-right: 6px; }
.over .seg-icon { width: 19px; padding-left: 5px; }
.snap .seg-icon { padding-left: 3px; }

.canvas { flex: 1; position: relative; overflow: hidden; }
.grid { position: absolute; left: 0; top: 0; }
.world { position: absolute; left: 0; top: -75px; width: 1920px; height: 1080px; }
.links { position: absolute; left: 0; top: 0; }
.solid { stroke-width: 1.8; }
.thin { stroke-width: 1; stroke-dasharray: 7 1; opacity: .85; }
.dash { stroke-width: 1; stroke-dasharray: 4 1.2; opacity: .8; }

.frame {
  position: absolute; background: #0f0f0f; border-radius: 3px; box-shadow: 0 1px 6px rgba(0, 0, 0, .55);
  text-align: center; font-size: 21.7px; line-height: 48px; color: #b8b8b8; letter-spacing: .2px;
}

.node {
  position: absolute; background: #303030; border-radius: 2px; box-shadow: 0 0 0 .5px #111, 0 1px 5px rgba(0, 0, 0, .75);
  font-family: "DejaVu Sans", sans-serif; font-size: 7.2px; letter-spacing: -.57px; line-height: 14.3px; color: #e8e8e8; text-shadow: 0 .5px 1px #000;
}
.nhead { height: 13px; line-height: 13px; display: flex; align-items: center; gap: 4.5px; padding: .5px 0 0 6px; border-radius: 2px 2px 0 0; border-bottom: .5px solid rgba(0, 0, 0, .3); }
.nhead span { padding-top: .8px; }
.geo .nhead { background: #1d725e; }
.inp .nhead { background: #83314a; }
.tex .nhead { background: #79461d; }
.conv .nhead { background: #246283; }
.group.node { display: block; overflow: visible; border: 0; border-radius: 2px; background: #303030; }
.group .nhead { background: #1b1b1b; }
.nbody { padding: 2.7px 7px 0; }
.row { position: relative; height: 14.3px; display: flex; align-items: center; }
.gap-lg { margin-top: 5.3px; }
.gap-md { margin-top: 2.6px; }
.gap-sm { margin-top: 1.8px; }
.gap-xs { margin-top: 1.5px; }
.out { justify-content: flex-end; }
.lab { padding-top: .5px; }
.out .lab { padding-right: .5px; }
.socket { position: absolute; left: -12.4px; top: 2.15px; overflow: visible; }
.out .socket { left: auto; right: -12.4px; }
.box, .dropbox, .segs, .datablock { height: 12px; width: 100%; border-radius: 2px; display: flex; align-items: center; justify-content: space-between; line-height: 12px; }
.box { position: relative; padding: 0 9px; background: #545454; overflow: hidden; }
.box span { position: relative; }
.driven.box, .driven.segs span { background: #772aa0; }
.slider { position: absolute; left: 0; top: 0; height: 100%; background: #4772b3; }
.dropbox { padding: 0 2px 0 4px; background: #282828; border: 1px solid #3d3d3d; }
.segs { gap: 1px; overflow: hidden; }
.segs span { flex: 1; text-align: center; background: #545454; }
.segs .on { background: #4772b3; }
.tick { width: 9.5px; height: 9.5px; margin-right: 2px; background: #545454; border-radius: 1.5px; }
.tick.on { background: #4772b3; }
.row.vec { height: 38.7px; }
.vbox { width: 100%; height: 37.5px; border-radius: 2px; overflow: hidden; display: flex; flex-direction: column; gap: 1px; }
.vbox div { flex: 1; padding: 0 9px 1.4px; display: flex; justify-content: space-between; align-items: center; background: #545454; line-height: 10px; }
.datablock { background: #1d1d1d; border: 1px solid #3d3d3d; padding: 0 4.5px 0 .5px; }
.datablock span { flex: 1; padding-left: 5px; }

.row.ramp { height: 76.7px; align-items: flex-start; }
.rampui { width: 100%; padding-top: 9.8px; }
.rtools { display: flex; align-items: center; height: 11.7px; padding-left: 2px; }
.rtools b { width: 16px; font: 9px/11px "DejaVu Sans", sans-serif; }
.pair { display: flex; width: 82px; margin-left: auto; height: 12px; border: 1px solid #3d3d3d; border-radius: 2px; background: #282828; line-height: 10px; }
.pair span { flex: 1; display: flex; align-items: center; justify-content: space-between; padding: 0 2px 0 3px; }
.pair span + span { border-left: 1px solid #3d3d3d; }
.band { position: relative; height: 14px; margin: 3px 4.5px 0 4px; border: 1px solid #000; border-bottom: 1px solid #555; }
.band svg { position: absolute; top: -1px; margin-left: -4px; }
.rpos { display: flex; gap: 6px; height: 12px; margin-top: 7px; line-height: 12px; }
.rpos span { background: #545454; border-radius: 2px; }
.idx { width: 39.5px; text-align: center; }
.pos { flex: 1; display: flex; justify-content: space-between; padding: 0 9px; }
.pos em { font-style: normal; }
.swatch { height: 12px; margin-top: 4.3px; background: #000; border: 1px solid #3a3a3a; border-radius: 2px; }

.crumb { position: absolute; left: 18px; top: 12px; display: flex; align-items: center; gap: 8px; color: #e0e0e0; text-shadow: 0 1px 1px #000; }
.crumb span { line-height: 22px; padding-top: 1px; }
.tab { position: absolute; top: 14px; height: 16px; width: 8px; background: #181818; display: flex; align-items: center; }
.tab.left { left: 0; border-radius: 0 4px 4px 0; }
.tab.right { right: 0; border-radius: 4px 0 0 4px; background: #222; }
.vscroll { position: absolute; right: 2px; top: 10px; width: 3px; height: 932px; background: #333; }
.hscroll { position: absolute; left: 9px; right: 9px; bottom: 2px; height: 3px; background: #343434; border-radius: 2px; }

.status { height: 21px; flex: none; background: #1d1d1d; display: flex; align-items: center; padding: 0 9px 0 12px; color: #999; border-top: 2px solid #161616; }
.hint { display: flex; align-items: center; gap: 11px; }
.hint-a { width: 211px; }
.hint-b { width: 211px; }
.hint-c { width: 430px; }
.report { display: flex; align-items: center; height: 18px; width: 170px; background: #1e2733; border: 1px solid #39424e; border-radius: 4px; color: #e6e6e6; overflow: hidden; }
.report b { width: 25px; height: 18px; background: #29406a; display: flex; align-items: center; justify-content: center; margin-right: 4px; }
.stats { letter-spacing: .16px; }

.taskbar { height: 30px; flex: none; display: flex; background: linear-gradient(90deg, #272e2e 0%, #20261f 14%, #20261f 27%, #282d2d 38%, #222822 53%, #292d2d 60%, #212b1f 72%, #25291b 83%, #212720 93%, #20261f 100%); }
.app { width: 37.1px; height: 30px; display: flex; align-items: center; justify-content: center; position: relative; }
.run::after { content: ""; position: absolute; bottom: 0; left: 5px; right: 4px; height: 2px; background: #9fe8c6; }
.active { background: #505650; }
.active::after { left: 0; right: 0; }
.tray { display: flex; align-items: center; font: 12px/30px "Open Sans", "Noto Sans", sans-serif; color: #fff; }
.t1 { margin-right: 11px; }
.t2 { margin-right: 10px; }
.t3 { margin-right: 7px; }
.t4 { margin-right: 11px; }
.t5 { margin-right: 16px; }
.clock { width: 63px; letter-spacing: -.4px; }
.t6 { margin-right: 18px; }
.peek { width: 1px; height: 30px; background: #555b55; margin-right: 4px; }
</style>
